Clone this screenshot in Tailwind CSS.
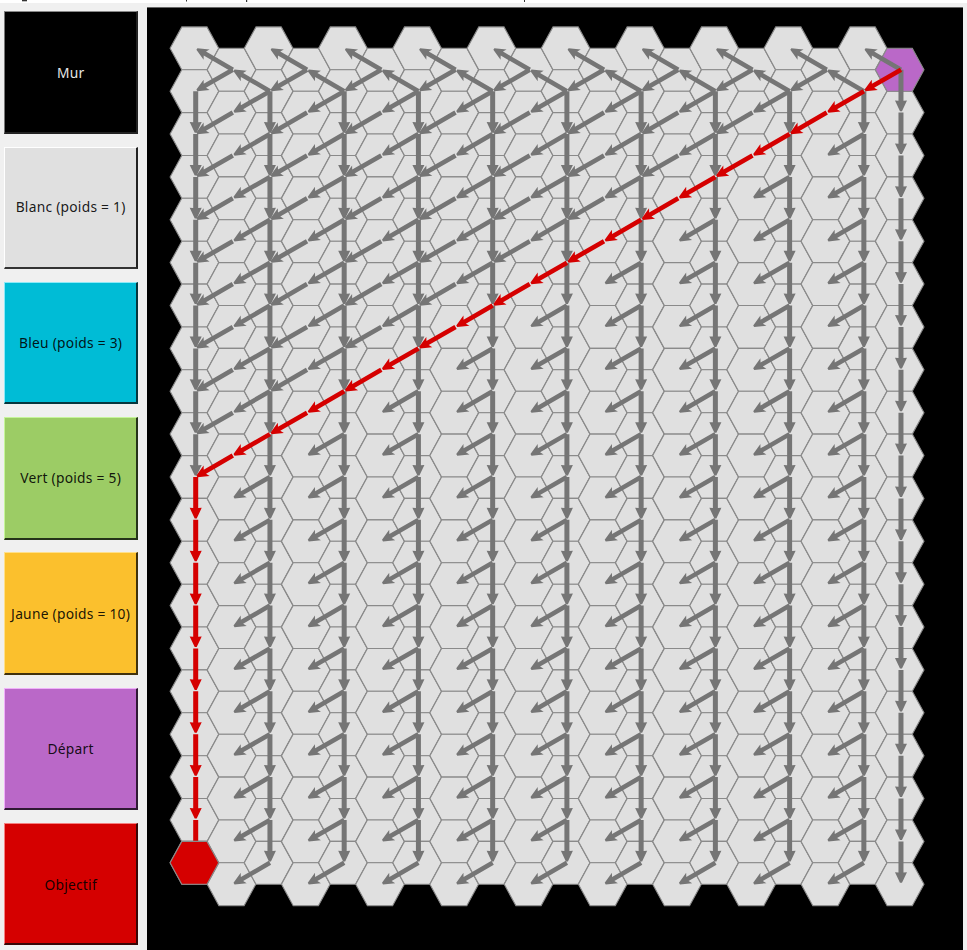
<!DOCTYPE html>
<html lang="fr">
<head>
<meta charset="utf-8">
<title>Hexagones</title>
<script src="https://cdn.jsdelivr.net/npm/@tailwindcss/browser@4"></script>
</head>
<body class="w-[967px] h-[950px] overflow-hidden bg-[#f0f0f0] font-['Noto_Sans','Open_Sans',sans-serif] flex flex-col">
<header class="h-[3px] shrink-0 bg-white">
<svg class="block" width="967" height="3"><g fill="#333"><rect x="22" y="0" width="5" height="1.3"/><rect x="186" y="0" width="1" height="1.5"/><rect x="246" y="0" width="1.2" height="2"/><rect x="524" y="0" width="1" height="2"/></g></svg>
</header>
<div class="flex flex-1 min-h-0">
<nav class="w-[147px] shrink-0 pl-[4.4px] pt-[8.3px] flex flex-col gap-[12.9px] text-[13.8px] tracking-[0.25px] text-black/90">
<button class="w-[133.5px] h-[122.4px] shrink-0 whitespace-nowrap pt-[2px] border-t border-l border-b-2 border-r-2 border-t-[#888] border-l-[#777] border-b-[#222] border-r-[#222] bg-black text-[#e6e6e6]">Mur</button>
<button class="w-[133.5px] h-[122.4px] shrink-0 whitespace-nowrap pt-[1px] border-t border-l border-b-2 border-r-2 border-t-white border-l-white border-b-[#333] border-r-[#222] bg-[#e0e0e0]">Blanc (poids = 1)</button>
<button class="w-[133.5px] h-[122.4px] shrink-0 whitespace-nowrap pt-[1px] border-t border-l border-b-2 border-r-2 border-t-[#8deaf8] border-l-[#8deaf8] border-b-[#06363d] border-r-[#06363d] bg-[#00bcd6]">Bleu (poids = 3)</button>
<button class="w-[133.5px] h-[122.4px] shrink-0 whitespace-nowrap pt-[2px] border-t border-l border-b-2 border-r-2 border-t-[#c6f59a] border-l-[#c6f59a] border-b-[#26331a] border-r-[#26331a] bg-[#9ccc65]">Vert (poids = 5)</button>
<button class="w-[133.5px] h-[122.4px] shrink-0 whitespace-nowrap pt-[2px] border-t border-l border-b-2 border-r-2 border-t-[#ffe08a] border-l-[#ffe08a] border-b-[#40310c] border-r-[#40310c] bg-[#fbc02d]">Jaune (poids = 10)</button>
<button class="w-[133.5px] h-[122.4px] shrink-0 whitespace-nowrap pt-[2px] border-t border-l border-b-2 border-r-2 border-t-[#f0b0fa] border-l-[#f0b0fa] border-b-[#2f1a33] border-r-[#2f1a33] bg-[#ba68c8]">Départ</button>
<button class="w-[133.5px] h-[122.4px] shrink-0 whitespace-nowrap pt-[3px] border-t border-l border-b-2 border-r-2 border-t-[#f58080] border-l-[#f58080] border-b-[#380606] border-r-[#380606] bg-[#d50000]">Objectif</button>
</nav>
<main class="w-[816px] mt-[4px] bg-black border-t border-[#666]">
<svg id="grid" class="block" width="816" height="942" viewBox="147 8 816 942"></svg>
</main>
</div>
<script>
const COLS = 20, ROWS = 20, R = 24.3, F = 12.6, DX = 37.12, H = 42.87;
const center = (c, r) => [194.4 + c * DX, 48.3 + r * H + (c % 2 ? H / 2 : 0)];
const hex = (c, r, fill) => {
  const [x, y] = center(c, r);
  const pts = [[-R, 0], [-F, -H / 2], [F, -H / 2], [R, 0], [F, H / 2], [-F, H / 2]];
  return `<polygon points="${pts.map(p => (x + p[0]).toFixed(1) + ',' + (y + p[1]).toFixed(1)).join(' ')}" fill="${fill}" stroke="#8a8a8a" stroke-width="1.1"/>`;
};
const arrow = (a, b, color) => {
  const p = center(...a), q = center(...b);
  const x1 = p[0] + 1.3, y1 = p[1], x2 = q[0] + 1.3, y2 = q[1];
  const L = Math.hypot(x2 - x1, y2 - y1), deg = Math.atan2(y2 - y1, x2 - x1) * 180 / Math.PI;
  const vertical = a[0] === b[0], w = vertical ? 2.5 : 2.3, t = L - 1.4;
  const neck = t - (vertical ? 10.4 : 9.2), wing = t - (vertical ? 10.6 : 11.2);
  return `<path transform="translate(${x1.toFixed(2)} ${y1.toFixed(2)}) rotate(${deg.toFixed(2)})" d="M0 ${-w}H${neck}L${wing} -6L${t} -1V1L${wing} 6L${neck} ${w}H0Z" fill="${color}"/>`;
};
let cells = '', arrows = '', path = '';
for (let c = 0; c < COLS; c++) for (let r = 0; r < ROWS; r++) if (c !== 19 || r) cells += hex(c, r, '#e0e0e0');
cells += hex(19, 0, '#ba68c8');
const G = '#757575', RED = '#d50000';
for (let c = 0; c < COLS; c += 2) {
  for (let r = 1; r < ROWS - 1; r++) {
    if (c === 0 && r >= 10) path += arrow([c, r], [c, r + 1], RED);
    else arrows += arrow([c, r], [c, r + 1], G);
  }
  arrows += arrow([c + 1, 0], [c, 0], G);
  const last = 1 + (18 - c) / 2;
  for (let r = 1; r <= last; r++) {
    if (r === last) path += arrow([c + 1, r - 1], [c, r], RED);
    else arrows += arrow([c + 1, r - 1], [c, r], G);
  }
  if (c > 0) {
    arrows += arrow([c, 1], [c - 1, 0], G);
    for (let r = 1; r < ROWS; r++) {
      if (r === last) path += arrow([c, r], [c - 1, r], RED);
      else arrows += arrow([c, r], [c - 1, r], G);
    }
  }
}
for (let r = 0; r < ROWS - 1; r++) arrows += arrow([19, r], [19, r + 1], G);
document.getElementById('grid').innerHTML = cells + arrows + path + hex(0, 19, RED);
</script>
</body>
</html>
